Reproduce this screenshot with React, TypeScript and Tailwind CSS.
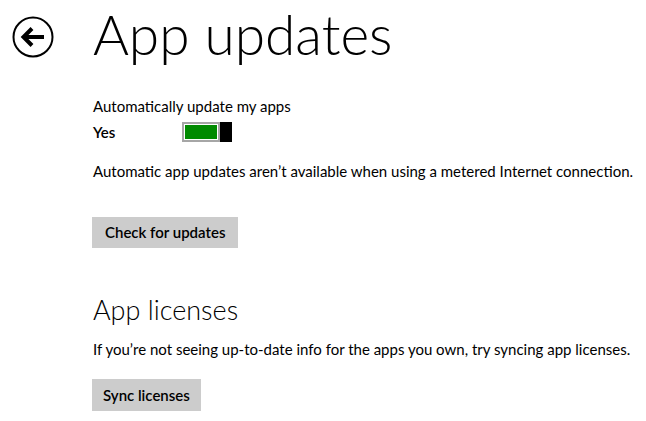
import React from "react";

function BackIcon() {
  return (
    <svg width="42" height="42" viewBox="0 0 42 42" fill="none">
      <circle cx="21" cy="21" r="19.5" stroke="black" strokeWidth="2" />
      <path d="M12 21 H32" stroke="black" strokeWidth="4" />
      <path d="M20 12.5 L11.5 21 L20 29.5" stroke="black" strokeWidth="4" strokeLinejoin="miter" />
    </svg>
  );
}

function Toggle() {
  return (
    <div className="flex h-[20px] w-[50px]">
      <div className="flex-1 border-2 border-[#a6a6a6] p-px bg-white">
        <div className="h-full w-full bg-[#008a00]" />
      </div>
      <div className="w-[12px] h-full bg-black" />
    </div>
  );
}

export default function App() {
  return (
    <div className="w-[646px] h-[421px] bg-white flex text-black overflow-hidden whitespace-nowrap font-['Lato',sans-serif]">
      {/* back button column */}
      <div className="w-[93px] shrink-0 pl-[12px] pt-[16px]">
        <BackIcon />
      </div>

      <div className="flex flex-col items-start">
        <h1 className="mt-[7px] text-[55px] leading-[54px] font-light">App updates</h1>

        <p className="mt-[35px] text-[15px] leading-[20px]">Automatically update my apps</p>
        <div className="mt-[6px] flex items-start h-[20px]">
          <span className="w-[89px] text-[15px] leading-[20px] font-semibold">Yes</span>
          <Toggle />
        </div>

        <p className="mt-[19px] text-[15px] leading-[20px]">
          Automatic app updates aren’t available when using a metered Internet connection.
        </p>

        <button className="mt-[36px] -ml-px h-[31px] px-[13px] bg-[#cccccc] text-[15px] leading-[31px] font-semibold">
          Check for updates
        </button>

        <h2 className="mt-[48px] text-[27px] leading-[28px] font-light">App licenses</h2>
        <p className="mt-[15px] text-[15px] leading-[20px]">
          If you’re not seeing up-to-date info for the apps you own, try syncing app licenses.
        </p>
        <button className="mt-[20px] -ml-px h-[32px] px-[11px] bg-[#cccccc] text-[15px] leading-[32px] font-semibold">
          Sync licenses
        </button>
      </div>
    </div>
  );
}
